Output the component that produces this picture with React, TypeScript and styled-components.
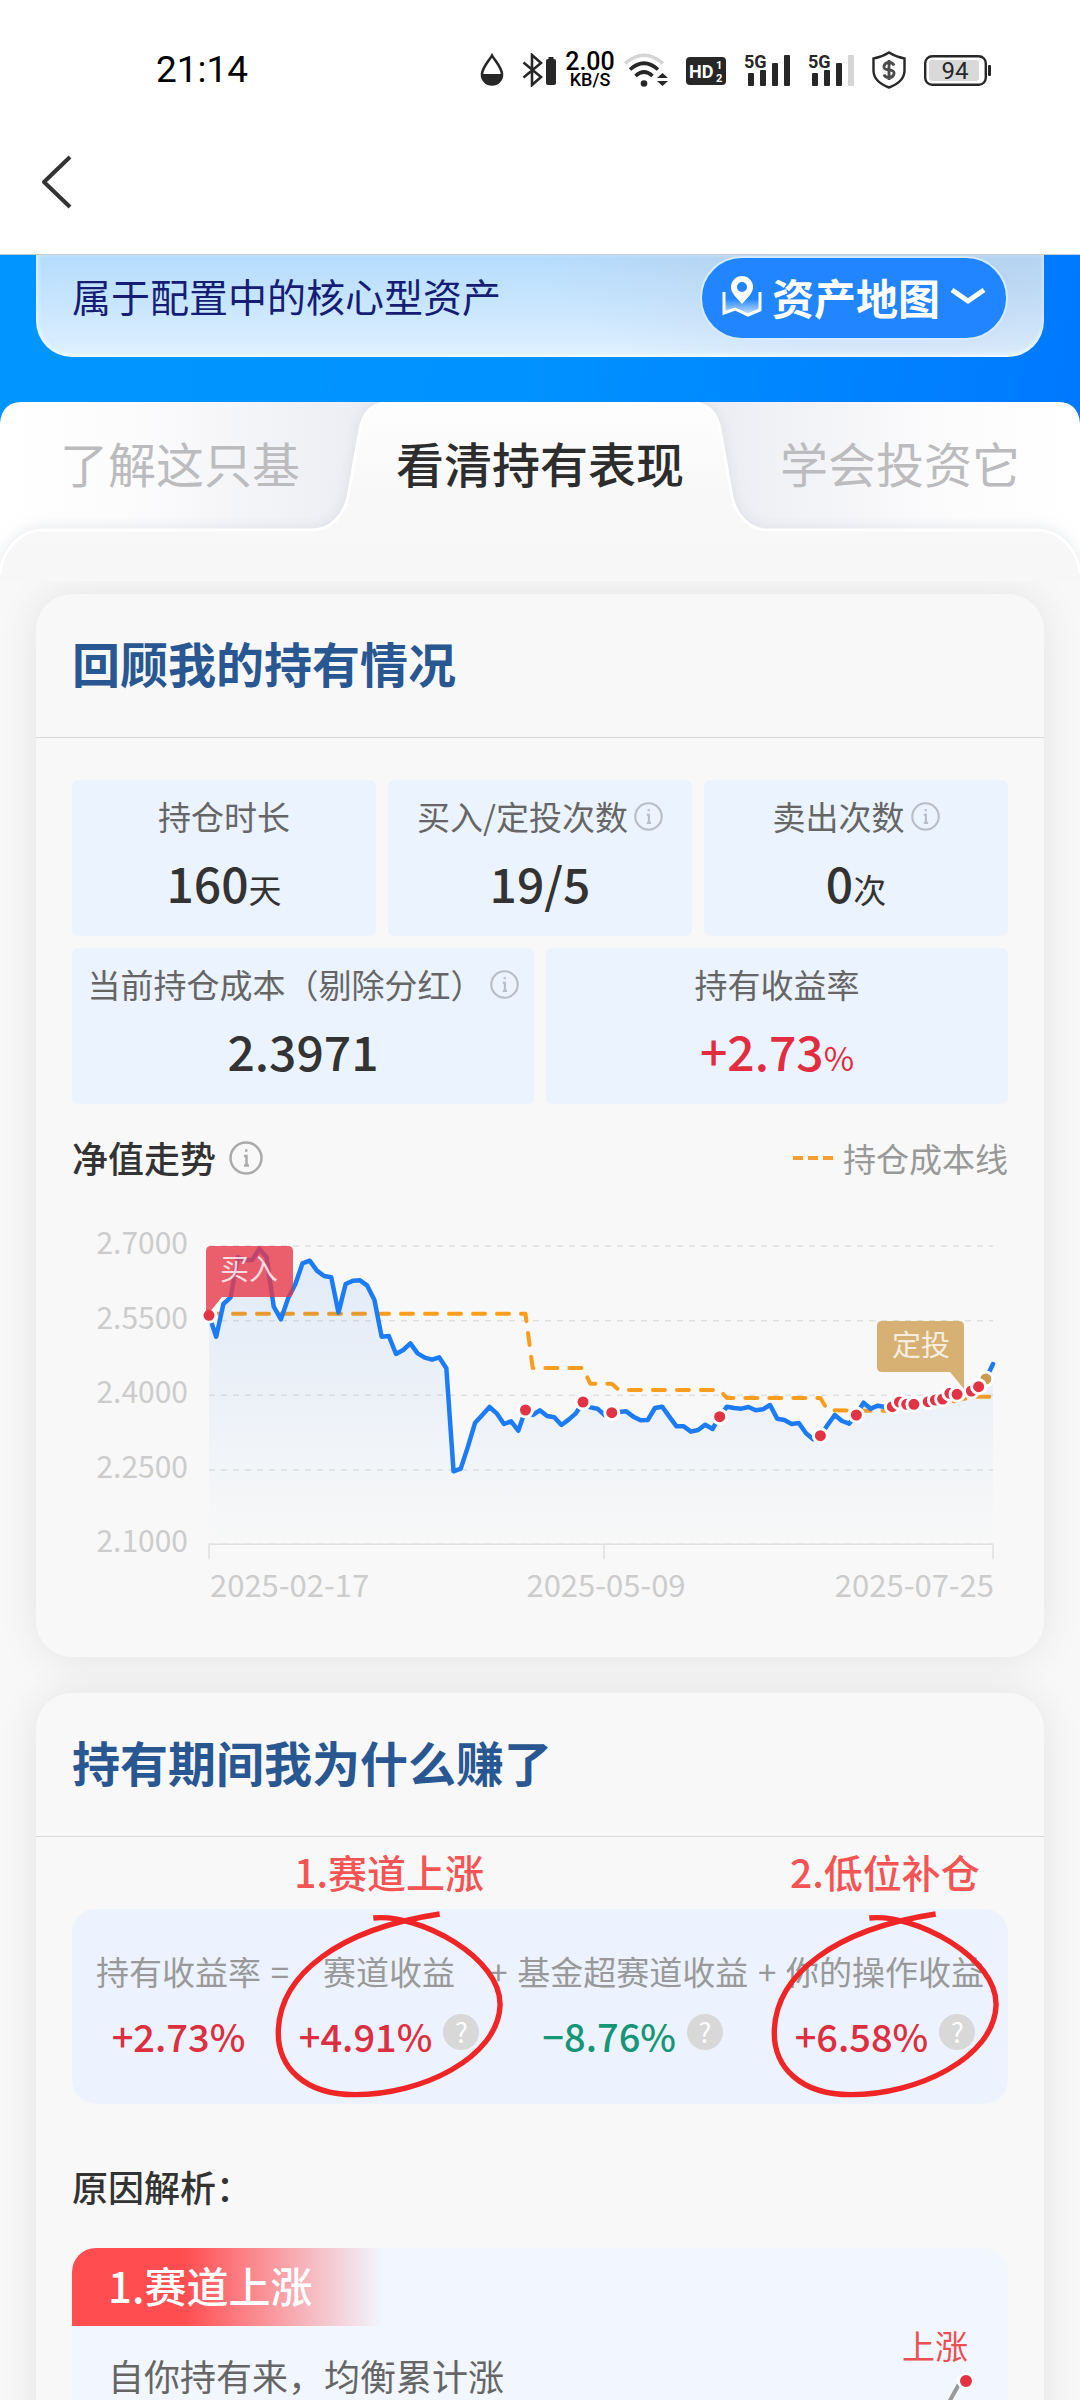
import React from "react";
import styled, { createGlobalStyle, css } from "styled-components";

const GlobalStyle = createGlobalStyle`
  * { box-sizing: border-box; }
  body {
    margin: 0;
    background: #f8f8f8;
    color: #333;
    font-family: "Noto Sans CJK SC", "Noto Sans", sans-serif;
  }
  h2, h3, p, dl, dt, dd { margin: 0; font-weight: inherit; }
  button {
    margin: 0;
    padding: 0;
    border: 0;
    background: none;
    color: inherit;
    font: inherit;
    cursor: pointer;
  }
  svg { display: block; }
`;

const Screen = styled.div`
  display: flex;
  flex-direction: column;
  height: 100vh;
  overflow: hidden;
`;

/* ---------- status bar and navigation ---------- */

const TopBar = styled.header`
  flex: none;
  background: #fff;
  border-bottom: 1px solid #c4ccd2;
`;

const StatusBar = styled.div`
  display: flex;
  align-items: center;
  justify-content: space-between;
  height: 110px;
  padding: 30px 89px 0 156px;
  font-family: Roboto, sans-serif;
  color: #000;
`;

const Clock = styled.time`
  font-size: 37px;
  line-height: 44px;
  font-weight: 400;
`;

const StatusIcons = styled.div<{ $gap: number }>`
  display: flex;
  align-items: center;
  gap: ${(p) => p.$gap}px;
`;

const Speed = styled.div`
  display: flex;
  flex-direction: column;
  align-items: center;
  width: 50px;
  font-weight: 500;
  text-align: center;
`;

const SpeedValue = styled.span`
  font-size: 25px;
  line-height: 20px;
`;

const SpeedUnit = styled.span`
  font-size: 18px;
  line-height: 16px;
`;

const NavBar = styled.nav`
  display: flex;
  align-items: center;
  height: 144px;
  padding: 0 36px;
`;

const BackButton = styled.button`
  padding: 12px 4px;
`;

/* ---------- hero ---------- */

const Scroller = styled.main`
  flex: 1;
  min-height: 0;
  overflow: hidden;
`;

const Hero = styled.section`
  padding: 0 36px 75px;
  margin-bottom: -30px;
  background: linear-gradient(100deg, #0095ff 0%, #0093ff 48%, #0078ff 100%);
`;

const HeroCard = styled.div`
  display: flex;
  align-items: center;
  justify-content: space-between;
  padding: 1px 36px 17px;
  border-radius: 0 0 36px 36px;
  background:
    radial-gradient(ellipse 36% 120% at 86% 10%, rgba(182, 194, 220, 0.5), rgba(205, 218, 236, 0) 100%),
    linear-gradient(180deg, #b4dcfd 0%, #def0ff 100%);
  box-shadow: inset 0 -3px 4px rgba(240, 252, 255, 0.9), inset 3px 0 4px rgba(230, 246, 255, 0.5);
`;

const HeroText = styled.p`
  padding-bottom: 6px;
  font-size: 39px;
  line-height: 52px;
  color: #151d75;
`;

const MapButton = styled.button`
  display: flex;
  align-items: center;
  justify-content: center;
  gap: 10px;
  width: 308px;
  height: 84px;
  padding-bottom: 2px;
  border: 2px solid #d6ebff;
  border-radius: 42px;
  background: #2085ff;
  color: #fff;
  font-size: 42px;
  font-weight: 700;
  line-height: 60px;
`;

/* ---------- tabs ---------- */

const Tabs = styled.div`
  position: relative;
  z-index: 1;
  display: grid;
  grid-template-columns: repeat(3, 1fr);
  align-items: start;
  height: 179px;
`;

const TabsShape = styled.svg`
  position: absolute;
  inset: 0;
  width: 100%;
  height: 100%;
`;

const Tab = styled.button<{ $active?: boolean }>`
  position: relative;
  padding: 28px 0;
  font-size: 48px;
  line-height: 64px;
  white-space: nowrap;
  color: ${(p) => (p.$active ? "#2d2d2d" : "#bcbcbe")};
  font-weight: ${(p) => (p.$active ? 500 : 400)};
`;

/* ---------- cards ---------- */

const Cards = styled.div`
  display: flex;
  flex-direction: column;
  gap: 36px;
  padding: 13px 36px 36px;
`;

const Card = styled.section`
  border-radius: 36px;
  background: #f8f8f8;
  box-shadow: 0 0 42px rgba(0, 0, 0, 0.09);
`;

const CardTitle = styled.h2`
  padding: 36px 36px 43px;
  border-bottom: 1px solid #d8d8d8;
  font-size: 48px;
  line-height: 64px;
  font-weight: 700;
  color: #285792;
`;

const CardBody = styled.div<{ $top: number }>`
  padding: ${(p) => p.$top}px 36px 37px;
`;

const StatRows = styled.dl`
  display: flex;
  flex-direction: column;
  gap: 12px;
`;

const StatRow = styled.div`
  display: flex;
  gap: 12px;
`;

const StatTile = styled.div`
  flex: 1 1 0;
  min-width: 0;
  display: flex;
  flex-direction: column;
  align-items: center;
  gap: 14px;
  padding: 14px 0 24px;
  border-radius: 6px;
  background: #ebf3ff;
`;

const StatLabel = styled.dt`
  display: flex;
  align-items: center;
  gap: 6px;
  font-size: 33px;
  line-height: 44px;
  white-space: nowrap;
  color: #666;
`;

const StatValue = styled.dd<{ $rise?: boolean }>`
  font-size: 48px;
  line-height: 60px;
  font-weight: 500;
  color: ${(p) => (p.$rise ? "#e12d3e" : "#333")};
`;

const StatUnit = styled.small`
  font-size: 33px;
  line-height: 33px;
  font-weight: 400;
`;

const IconButton = styled.button`
  flex: none;
`;

const ChartHead = styled.div`
  display: flex;
  align-items: center;
  justify-content: space-between;
  margin: 31px 0 20px;
`;

const ChartTitle = styled.h3`
  display: flex;
  align-items: center;
  gap: 13px;
  font-size: 36px;
  line-height: 45px;
  font-weight: 500;
`;

const Legend = styled.div`
  display: flex;
  align-items: center;
  gap: 10px;
  font-size: 33px;
  line-height: 44px;
  color: #999;
`;

const ChartSvg = styled.svg`
  width: 100%;
  height: auto;
  overflow: visible;
`;

/* ---------- return breakdown ---------- */

const Formula = styled.div`
  display: flex;
  justify-content: space-between;
  padding: 38px 24px 44px;
  border-radius: 24px;
  background: #ecf3ff;
`;

const Term = styled.div`
  position: relative;
  display: flex;
  flex-direction: column;
  align-items: center;
  gap: 16px;
`;

const termLine = css`
  font-size: 33px;
  line-height: 48px;
  white-space: nowrap;
  color: #999;
`;

const TermLabel = styled.span`
  ${termLine}
`;

const Operator = styled.span`
  ${termLine}
`;

const TermValue = styled.div<{ $tone: "rise" | "fall" }>`
  display: flex;
  align-items: center;
  gap: 11px;
  height: 49px;
  font-size: 38px;
  line-height: 49px;
  font-weight: 500;
  color: ${(p) => (p.$tone === "rise" ? "#dc2f40" : "#169676")};
`;

const HelpButton = styled.button`
  width: 36px;
  height: 36px;
  margin-bottom: 8px;
  border-radius: 50%;
  background: #d8d8d8;
  color: #fff;
  font-size: 27px;
  line-height: 36px;
  font-weight: 400;
`;

const Remark = styled.div`
  position: absolute;
  left: 50%;
  top: -103px;
  transform: translateX(-50%);
  display: flex;
  flex-direction: column;
  align-items: center;
  gap: 13px;
  pointer-events: none;
`;

const RemarkText = styled.span`
  font-size: 39px;
  line-height: 54px;
  font-weight: 500;
  white-space: nowrap;
  color: #f45453;
`;

const Subheading = styled.h3`
  margin: 58px 0 38px;
  font-size: 36px;
  line-height: 48px;
  font-weight: 500;
`;

const Reason = styled.article`
  border-radius: 24px;
  overflow: hidden;
  background: #f1f6ff;
`;

const ReasonTag = styled.h3`
  width: 310px;
  padding: 7px 36px 11px;
  background: linear-gradient(90deg, #ff4d50 0%, #ff4d50 36%, rgba(255, 77, 80, 0) 100%);
  font-size: 42px;
  line-height: 60px;
  font-weight: 500;
  color: #fff;
`;

const ReasonBody = styled.div`
  display: flex;
  justify-content: space-between;
  padding: 0 36px 48px;
`;

const ReasonText = styled.p`
  padding-top: 22px;
  font-size: 36px;
  line-height: 54px;
  color: #666;
`;

const Trend = styled.figure`
  display: flex;
  flex-direction: column;
  align-items: flex-end;
  margin: 0;
`;

const TrendLabel = styled.figcaption`
  padding-right: 4px;
  font-size: 33px;
  line-height: 38px;
  color: #ea5052;
`;

/* ---------- drawings ---------- */

const INK = "#272727";

const Drop = () => (
  <svg width="24" height="34" viewBox="0 0 24 34">
    <path d="M12 2.5C9 8 2 14.500 2 21.500a10 10 0 0 0 20 0C22 14.500 15 8 12 2.500Z" fill="none" stroke={INK} strokeWidth="2.600" />
    <path d="M1.500 21h21a10.500 11 0 0 1-21 0Z" fill={INK} />
  </svg>
);

const Bluetooth = () => (
  <svg width="34" height="34" viewBox="0 0 34 34">
    <path d="M1.500 9.500 19 24l-9 8V2l9 8L1.500 24.500" fill="none" stroke={INK} strokeWidth="2.600" />
    <rect x="24" y="6" width="10" height="26" rx="2" fill={INK} />
    <rect x="26.500" y="4" width="5" height="2" fill={INK} />
  </svg>
);

const Wifi = () => (
  <svg width="44" height="34" viewBox="0 0 44 34">
    <g fill="none" strokeWidth="3.600">
      <path d="M1 10.500Q20 -6 39 10.500" stroke="#d5d5d5" />
      <path d="M6 16.500Q20 4 34 16.500" stroke={INK} />
      <path d="M11.500 23Q20 15 28.500 23" stroke={INK} />
    </g>
    <circle cx="20" cy="30.500" r="3.300" fill={INK} />
    <path d="M33 25h11l-5.500-5ZM33 28h11l-5.500 5Z" fill={INK} />
  </svg>
);

const Hd = () => (
  <svg width="40" height="34" viewBox="0 0 40 34" fontFamily="Liberation Sans Narrow, Roboto, sans-serif">
    <rect y="4" width="40" height="28" rx="4" fill={INK} />
    <g fill="#fff" fontWeight="700">
      <text x="3" y="25" fontSize="18">HD</text>
      <text x="30" y="16" fontSize="11">1</text>
      <text x="30" y="29" fontSize="11">2</text>
    </g>
  </svg>
);

const Signal = ({ weak }: { weak?: boolean }) => (
  <svg width="46" height="34" viewBox="0 0 46 34" fill={INK} overflow="visible">
    <text x="0" y="15" fontSize="18" fontWeight="700" fontFamily="Liberation Sans Narrow, Roboto, sans-serif">5G</text>
    <rect x="4" y="20" width="6" height="13" rx="1" />
    <rect x="16" y="17" width="6" height="16" rx="1" />
    <rect x="28" y="10" width="6" height="23" rx="1" />
    <rect x="40" y="2" width="6" height="31" rx="1" fill={weak ? "#d5d5d5" : INK} />
  </svg>
);

const Shield = () => (
  <svg width="34" height="38" viewBox="0 0 34 38">
    <path d="M17 1.500Q24 6 32.500 7.500V20Q32 31 17 36.500Q2 31 1.500 20V7.500Q10 6 17 1.500Z" fill="none" stroke={INK} strokeWidth="2.400" />
    <path d="M22 14.500q-1-3-5-3t-5 3.500 5 4 5 4-5 3.500-5-3M17 9v20" fill="none" stroke="#4a4a4a" strokeWidth="2.800" />
  </svg>
);

const Battery = () => (
  <svg width="67" height="34" viewBox="0 0 67 34">
    <rect x="1.200" y="3.200" width="60.600" height="28.600" rx="7" fill="none" stroke={INK} strokeWidth="2.400" />
    <rect x="5" y="7" width="50" height="21" rx="3" fill="#d9d9d9" />
    <rect x="64" y="12" width="3" height="11" rx="1" fill={INK} />
    <text x="31" y="26" fontSize="24" textAnchor="middle" fill={INK}>94</text>
  </svg>
);

const BackIcon = () => (
  <svg width="34" height="54" viewBox="0 0 34 54" fill="none" stroke="#333" strokeWidth="4" strokeLinejoin="round">
    <path d="M30 2 4 27l26 25" />
  </svg>
);

const MapIcon = () => (
  <svg width="40" height="42" viewBox="0 0 40 42">
    <defs>
      <linearGradient id="mapFill" x1="0" y1="0" x2="0" y2="1">
        <stop offset="0.300" stopColor="#fff" stopOpacity="0" />
        <stop offset="1" stopColor="#fff" stopOpacity="0.800" />
      </linearGradient>
    </defs>
    <path d="M2 16v21l11-4 13 6 12-5V16" fill="url(#mapFill)" stroke="#fff" strokeWidth="3" />
    <path d="M20 28C14 21 9 17 9 11a11 11 0 0 1 22 0C31 17 26 21 20 28Z" fill="#fff" />
    <circle cx="20" cy="11" r="5" fill="#2085ff" />
  </svg>
);

const ChevronDown = () => (
  <svg width="36" height="20" viewBox="0 0 36 20" fill="none" stroke="#fff" strokeWidth="5">
    <path d="M2 3 18 14 34 3" />
  </svg>
);

const InfoIcon = ({ size, color }: { size: number; color: string }) => (
  <svg width={size} height={size} viewBox="0 0 34 34" fill="none" stroke={color} strokeWidth="2.500">
    <circle cx="17" cy="17" r="15.500" />
    <path d="M15 15h2.500v9M15 24.500h5M16 9.500h2.500" />
  </svg>
);

const Info = ({ size = 29, color = "#b9bec6", label }: { size?: number; color?: string; label: string }) => (
  <IconButton type="button" aria-label={label}>
    <InfoIcon size={size} color={color} />
  </IconButton>
);

const HandCircle = () => (
  <svg width="228" height="187" viewBox="0 0 684 561" fill="none" stroke="#f02626" strokeWidth="16">
    <path d="M295 21C430 6 682 140 675 285C668 440 440 551 240 551C90 551 5 470 10 355C18 190 190 55 494 9" />
  </svg>
);

const tabOutline =
  "M0 172C2 148 20 128 44 128H312C332 128 344 112 348 95L360 27C363 10 373 1 388 1H692C707 1 717 10 720 27L732 95C736 112 748 128 768 128H1036C1060 128 1078 148 1080 172";

const TabsBackground = () => (
  <TabsShape viewBox="0 0 1080 179" preserveAspectRatio="none" aria-hidden="true">
    <defs>
      <linearGradient id="tabBase" x1="0" x2="1" y1="0" y2="0">
        <stop offset="0" stopColor="#ffffff" />
        <stop offset="0.120" stopColor="#fcfcfd" />
        <stop offset="0.330" stopColor="#edeef3" />
        <stop offset="0.670" stopColor="#edeef3" />
        <stop offset="0.880" stopColor="#fcfcfd" />
        <stop offset="1" stopColor="#ffffff" />
      </linearGradient>
      <linearGradient id="tabFront" x1="0" x2="0" y1="0" y2="1">
        <stop offset="0" stopColor="#fefefe" />
        <stop offset="0.500" stopColor="#f8f8f8" />
        <stop offset="1" stopColor="#f7f7f8" />
      </linearGradient>
      <filter id="tabShade" x="-5%" y="-20%" width="110%" height="140%">
        <feDropShadow dx="0" dy="-2" stdDeviation="7" floodColor="#b4b8c8" floodOpacity="0.350" />
      </filter>
      <clipPath id="tabClip">
        <path d="M0 179V21Q2 0 22 0H1058Q1078 0 1080 21V179Z" />
      </clipPath>
    </defs>
    <g clipPath="url(#tabClip)">
      <rect width="1080" height="179" fill="url(#tabBase)" />
      <path d={`${tabOutline}V179H0Z`} fill="url(#tabFront)" filter="url(#tabShade)" />
      <path d={tabOutline} fill="none" stroke="#fff" strokeWidth="3" />
    </g>
  </TabsShape>
);

/* Net value per trading day, as depth below the top edge in thirds of a unit. */
const navLevels = [
  586, 650, 552, 532, 412, 420, 420, 387, 412, 560, 598, 535, 493, 430, 422, 452, 468, 472, 578, 492, 482, 481,
  497, 540, 650, 648, 702, 690, 670, 700, 713, 719, 712, 745, 1054, 1046, 980, 908, 885, 861, 880, 912, 904, 932,
  870, 885, 871, 888, 892, 915, 899, 880, 846, 862, 866, 885, 878, 876, 874, 890, 901, 900, 864, 860, 890, 919,
  919, 935, 930, 914, 927, 890, 860, 864, 866, 861, 871, 868, 855, 896, 900, 912, 909, 940, 958, 947, 915, 885,
  903, 911, 885, 848, 866, 857, 861, 860, 846, 853, 853, 850, 845, 840, 837, 820, 823, 818, 813, 800, 777, 732,
];

const costSteps: [number, number][] = [
  [0, 581], [44, 581], [45, 744], [52, 744], [53, 791], [56, 791], [57, 810], [71, 810], [72, 834], [85, 834],
  [86, 870], [90, 872], [95, 872], [100, 862], [105, 836], [107, 830], [109, 830],
];

const buyDays = [0, 44, 52, 56, 71, 85, 90, 95, 96, 97, 98, 100, 101, 102, 103, 104, 106, 107];
const planDay = 108;

const PLOT_LEFT = 137;
const PLOT_RIGHT = 921;
const xOf = (day: number) => PLOT_LEFT + (day * (PLOT_RIGHT - PLOT_LEFT)) / (navLevels.length - 1);
const yOf = (level: number) => (level - 240) / 3;
const toPoints = (pairs: [number, number][]) => pairs.map(([d, l]) => `${xOf(d)},${yOf(l)}`).join(" ");

const gridLines = [
  { label: "2.7000", level: 378 },
  { label: "2.5500", level: 602 },
  { label: "2.4000", level: 826 },
  { label: "2.2500", level: 1050 },
  { label: "2.1000", level: 1273 },
];

const NavChart = () => {
  const nav = toPoints(navLevels.map((l, i) => [i, l]));
  const base = yOf(1273);
  return (
    <ChartSvg viewBox="0 0 936 420" role="img" aria-label="净值走势">
      <defs>
        <linearGradient id="navArea" x1="0" x2="0" y1="46" y2="345" gradientUnits="userSpaceOnUse">
          <stop offset="0" stopColor="#1f7df5" stopOpacity="0.110" />
          <stop offset="1" stopColor="#1f7df5" stopOpacity="0" />
        </linearGradient>
      </defs>
      {gridLines.map((g) => (
        <line key={g.label} x1={PLOT_LEFT} x2={PLOT_RIGHT} y1={yOf(g.level)} y2={yOf(g.level)} stroke="#e0e0e0" strokeWidth="1.500" strokeDasharray="6 6" />
      ))}
      <path d={`M${PLOT_LEFT} ${base + 15}V${base}H${PLOT_RIGHT}V${base + 15}M532 ${base}v15`} fill="none" stroke="#dfdfdf" strokeWidth="1.500" />
      <g fontSize="31" fill="#ccc">
        {gridLines.map((g) => (
          <text key={g.label} x="116" y={yOf(g.level) + 8} fontSize="30" textAnchor="end">{g.label}</text>
        ))}
        <text x="138" y="397">2025-02-17</text>
        <text x="534" y="397" textAnchor="middle">2025-05-09</text>
        <text x="922" y="397" textAnchor="end">2025-07-25</text>
      </g>
      <polyline points={toPoints(costSteps)} fill="none" stroke="#fa9d1c" strokeWidth="4" strokeLinecap="round" strokeLinejoin="round" strokeDasharray="12 12" />
      <polygon points={`${PLOT_LEFT},${base} ${nav} ${PLOT_RIGHT},${base}`} fill="url(#navArea)" />
      <polyline points={nav} fill="none" stroke="#1c7bf6" strokeWidth="4.500" strokeLinejoin="round" strokeLinecap="round" />
      <g stroke="#fff" strokeWidth="3">
        <circle cx={xOf(planDay)} cy={yOf(navLevels[planDay])} r="7" fill="#cb9b50" />
        {buyDays.map((d) => (
          <circle key={d} cx={xOf(d)} cy={yOf(navLevels[d])} r="7" fill="#e23345" />
        ))}
      </g>
      <g fontSize="29" textAnchor="middle">
        <path d="M139 46H216Q221 46 221 51V92Q221 97 216 97H150L137 113H134V51Q134 46 139 46Z" fill="#e73849" fillOpacity="0.800" />
        <text x="177" y="80" fill="#fff" fillOpacity="0.800">买入</text>
        <path d="M810 121H887Q892 121 892 126V189L878 172H810Q805 172 805 167V126Q805 121 810 121Z" fill="#cb9640" fillOpacity="0.720" />
        <text x="849" y="156" fill="#fff" fillOpacity="0.800">定投</text>
      </g>
    </ChartSvg>
  );
};

/* ---------- page ---------- */

type TermProps = { label: string; value: string; tone?: "rise" | "fall"; help?: boolean; remark?: string };

const FormulaTerm = ({ label, value, tone = "rise", help, remark }: TermProps) => (
  <Term>
    <TermLabel>{label}</TermLabel>
    <TermValue $tone={tone}>
      {value}
      {help && <HelpButton type="button" aria-label={`${label}说明`}>?</HelpButton>}
    </TermValue>
    {remark && (
      <Remark>
        <RemarkText>{remark}</RemarkText>
        <HandCircle />
      </Remark>
    )}
  </Term>
);

type StatProps = { label: string; value: string; unit?: string; info?: boolean; rise?: boolean };

const Stat = ({ label, value, unit, info, rise }: StatProps) => (
  <StatTile>
    <StatLabel>
      {label}
      {info && <Info label={`${label}说明`} />}
    </StatLabel>
    <StatValue $rise={rise}>
      {value}
      {unit && <StatUnit>{unit}</StatUnit>}
    </StatValue>
  </StatTile>
);

export default function App() {
  return (
    <Screen>
      <GlobalStyle />
      <TopBar>
        <StatusBar>
          <Clock>21:14</Clock>
          <StatusIcons $gap={18}>
            <Drop />
            <StatusIcons $gap={9}>
              <Bluetooth />
              <Speed>
                <SpeedValue>2.00</SpeedValue>
                <SpeedUnit>KB/S</SpeedUnit>
              </Speed>
              <Wifi />
            </StatusIcons>
            <Hd />
            <Signal />
            <Signal weak />
            <Shield />
            <Battery />
          </StatusIcons>
        </StatusBar>
        <NavBar>
          <BackButton type="button" aria-label="返回">
            <BackIcon />
          </BackButton>
        </NavBar>
      </TopBar>

      <Scroller>
        <Hero>
          <HeroCard>
            <HeroText>属于配置中的核心型资产</HeroText>
            <MapButton type="button">
              <MapIcon />
              资产地图
              <ChevronDown />
            </MapButton>
          </HeroCard>
        </Hero>

        <Tabs role="tablist">
          <TabsBackground />
          <Tab type="button" role="tab">了解这只基</Tab>
          <Tab type="button" role="tab" aria-selected="true" $active>看清持有表现</Tab>
          <Tab type="button" role="tab">学会投资它</Tab>
        </Tabs>

        <Cards>
          <Card>
            <CardTitle>回顾我的持有情况</CardTitle>
            <CardBody $top={42}>
              <StatRows>
                <StatRow>
                  <Stat label="持仓时长" value="160" unit="天" />
                  <Stat label="买入/定投次数" value="19/5" info />
                  <Stat label="卖出次数" value="0" unit="次" info />
                </StatRow>
                <StatRow>
                  <Stat label="当前持仓成本（剔除分红）" value="2.3971" info />
                  <Stat label="持有收益率" value="+2.73" unit="%" rise />
                </StatRow>
              </StatRows>
              <ChartHead>
                <ChartTitle>
                  净值走势
                  <Info size={34} color="#aaa" label="净值走势说明" />
                </ChartTitle>
                <Legend>
                  <svg width="40" height="4" viewBox="0 0 40 4" stroke="#f5a02e" strokeWidth="4" strokeDasharray="10 5">
                    <path d="M0 2H40" />
                  </svg>
                  持仓成本线
                </Legend>
              </ChartHead>
              <NavChart />
            </CardBody>
          </Card>

          <Card>
            <CardTitle>持有期间我为什么赚了</CardTitle>
            <CardBody $top={72}>
              <Formula>
                <FormulaTerm label="持有收益率" value="+2.73%" />
                <Operator>=</Operator>
                <FormulaTerm label="赛道收益" value="+4.91%" help remark="1.赛道上涨" />
                <Operator>+</Operator>
                <FormulaTerm label="基金超赛道收益" value="−8.76%" tone="fall" help />
                <Operator>+</Operator>
                <FormulaTerm label="你的操作收益" value="+6.58%" help remark="2.低位补仓" />
              </Formula>
              <Subheading>原因解析：</Subheading>
              <Reason>
                <ReasonTag>1.赛道上涨</ReasonTag>
                <ReasonBody>
                  <ReasonText>自你持有来，均衡累计涨</ReasonText>
                  <Trend>
                    <TrendLabel>上涨</TrendLabel>
                    <svg width="80" height="120" viewBox="0 0 80 120">
                      <path d="M72 18 66 22 56 40 40 60 26 54 4 100" fill="none" stroke="#999" strokeWidth="4" />
                      <circle cx="74" cy="17" r="7.500" fill="#e23345" stroke="#fff" strokeWidth="3" />
                    </svg>
                  </Trend>
                </ReasonBody>
              </Reason>
            </CardBody>
          </Card>
        </Cards>
      </Scroller>
    </Screen>
  );
}
